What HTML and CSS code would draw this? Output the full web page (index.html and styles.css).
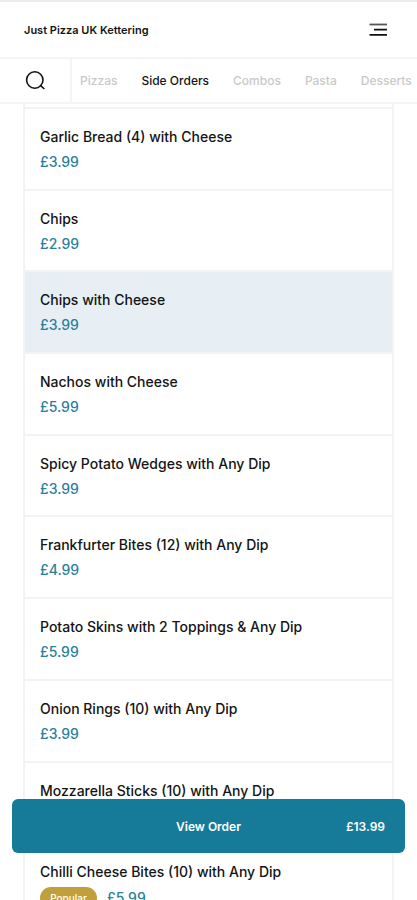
FILE: index.html
```html
<!DOCTYPE html>
<html lang="en">
<head>
<meta charset="utf-8">
<meta name="viewport" content="width=device-width, initial-scale=1">
<title>Just Pizza UK Kettering</title>
<link rel="stylesheet" href="styles.css">
</head>
<body>
<header class="topbar">
  <h1 class="brand">Just Pizza UK Kettering</h1>
  <button class="icon-button" type="button" aria-label="Menu">
    <svg width="18" height="14" viewBox="0 0 18 14" fill="none" stroke-width="1.8"><path stroke="#555" d="M0.5 1.5H18"/><path stroke="#111" d="M5 6.6H18M0.5 11.8H18"/></svg>
  </button>
</header>
<nav class="categories">
  <button class="icon-button search" type="button" aria-label="Search">
    <svg width="20" height="20" viewBox="0 0 20 20" fill="none" stroke="#111" stroke-width="1.6"><circle cx="9.8" cy="9" r="8.2"/><path d="M15.2 14.2L19.3 18"/></svg>
  </button>
  <div class="tabs">
    <a class="tab" href="#pizzas">Pizzas</a>
    <a class="tab active" href="#sides">Side Orders</a>
    <a class="tab" href="#combos">Combos</a>
    <a class="tab" href="#pasta">Pasta</a>
    <a class="tab" href="#desserts">Desserts</a>
  </div>
</nav>
<main class="menu">
  <ul class="items">
    <li class="item"><h2 class="name">Garlic Bread (4) with Cheese</h2><p class="price">£3.99</p></li>
    <li class="item"><h2 class="name">Chips</h2><p class="price">£2.99</p></li>
    <li class="item selected"><h2 class="name">Chips with Cheese</h2><p class="price">£3.99</p></li>
    <li class="item"><h2 class="name">Nachos with Cheese</h2><p class="price">£5.99</p></li>
    <li class="item"><h2 class="name">Spicy Potato Wedges with Any Dip</h2><p class="price">£3.99</p></li>
    <li class="item"><h2 class="name">Frankfurter Bites (12) with Any Dip</h2><p class="price">£4.99</p></li>
    <li class="item"><h2 class="name">Potato Skins with 2 Toppings &amp; Any Dip</h2><p class="price">£5.99</p></li>
    <li class="item"><h2 class="name">Onion Rings (10) with Any Dip</h2><p class="price">£3.99</p></li>
    <li class="item"><h2 class="name">Mozzarella Sticks (10) with Any Dip</h2><p class="price">£5.99</p></li>
    <li class="item"><h2 class="name">Chilli Cheese Bites (10) with Any Dip</h2><p class="price"><span class="badge">Popular</span>£5.99</p></li>
  </ul>
</main>
<button class="order" type="button"><span class="order-label">View Order</span><span class="order-total">£13.99</span></button>
</body>
</html>
```
FILE: styles.css
```css
* { box-sizing: border-box; }
body {
  margin: 0;
  height: 100vh;
  display: flex;
  flex-direction: column;
  overflow: hidden;
  background: #fff;
  color: #141414;
  font-family: Inter, "Liberation Sans", sans-serif;
}
h1, h2, p, ul { margin: 0; padding: 0; font-size: inherit; }
button { border: 0; padding: 0; background: none; font: inherit; color: inherit; cursor: pointer; }
svg { display: block; }

.topbar {
  flex: none;
  height: 59px;
  padding: 0 30px 0 24px;
  display: flex;
  align-items: center;
  justify-content: space-between;
  border-top: 2px solid #ececec;
  border-bottom: 2px solid #f5f5f5;
}
.brand { font-size: 11px; font-weight: 600; }

.categories {
  flex: none;
  height: 45px;
  display: flex;
  border-bottom: 2px solid #f5f5f5;
}
.search {
  flex: none;
  width: 72px;
  padding-left: 25px;
  border-right: 2px solid #f5f5f5;
}
.tabs {
  flex: 1;
  min-width: 0;
  padding-left: 8px;
  display: flex;
  align-items: center;
  gap: 24px;
  overflow: hidden;
}
.tab { font-size: 12px; font-weight: 500; white-space: nowrap; color: #c9c9c9; text-decoration: none; }
.tab.active { color: #141414; }

.menu { flex: 1; min-height: 0; padding: 0 23px; overflow: hidden; }
.items {
  min-height: 820px;
  padding-top: 3px;
  display: grid;
  grid-auto-rows: 1fr;
  list-style: none;
  border: solid #f3f3f3;
  border-width: 0 2px;
}
.item { padding: 18px 15px 0; border-top: 2px solid #f3f3f3; }
.item.selected { background: #e7eff5; }
.name { font-size: 14px; line-height: 20px; font-weight: 500; }
.price {
  margin-top: 5px;
  display: flex;
  align-items: center;
  gap: 10px;
  font-size: 14px;
  line-height: 20px;
  font-weight: 500;
  color: #2a7f9c;
}
.badge {
  width: 57px;
  border-radius: 11px;
  background: #c1a03c;
  color: #fff;
  font-size: 10px;
  line-height: 22px;
  text-align: center;
}

.order {
  position: fixed;
  left: 12px;
  right: 12px;
  bottom: 47px;
  height: 54px;
  padding: 0 20px;
  display: grid;
  grid-template-columns: 1fr auto 1fr;
  align-items: center;
  border-radius: 6px;
  background: #157b99;
  color: #fff;
  font-size: 12px;
  font-weight: 600;
}
.order-label { grid-column: 2; }
.order-total { text-align: right; }
```
